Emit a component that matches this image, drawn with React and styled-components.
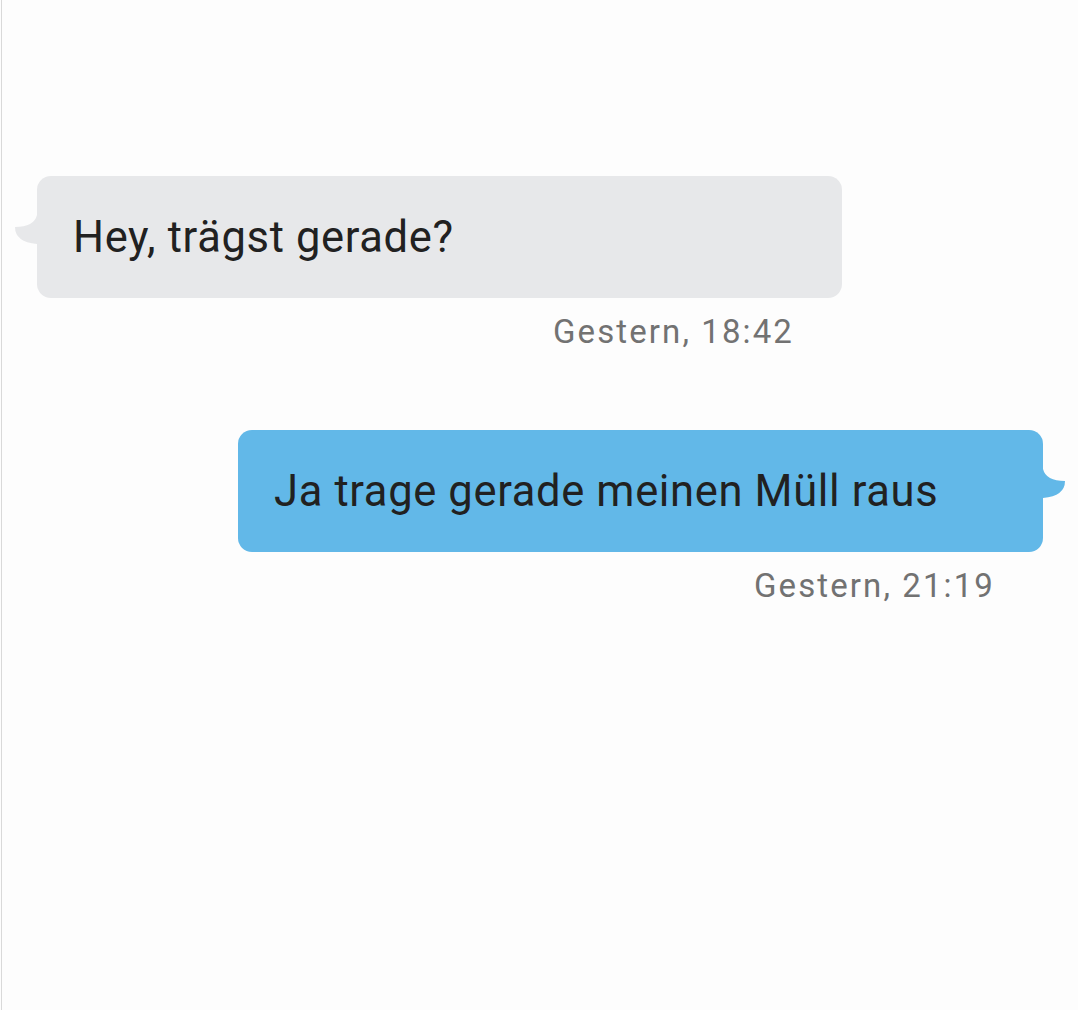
import React from "react";
import styled, { createGlobalStyle } from "styled-components";

const GlobalStyle = createGlobalStyle`
  html, body {
    margin: 0;
    padding: 0;
    background: #fdfdfd;
  }
  body {
    font-family: Roboto, "Noto Sans", Arial, sans-serif;
  }
`;

const Page = styled.div`
  box-sizing: border-box;
  min-height: 1010px;
  margin-left: 1px;
  border-left: 1px solid #d9d9d9;
  background: #fdfdfd;
  display: flex;
  flex-direction: column;
  gap: 79px;
  padding: 176px 35px 0 35px;
`;

const Group = styled.div`
  display: flex;
  flex-direction: column;
  align-items: ${(p) => (p.$out ? "flex-end" : "flex-start")};
`;

const Bubble = styled.div`
  position: relative;
  box-sizing: border-box;
  width: 805px;
  height: 122px;
  padding: 0 36px;
  display: flex;
  align-items: center;
  border-radius: 14px;
  background: ${(p) => (p.$out ? "#62b8e8" : "#e7e8ea")};
  color: #212121;
  font-size: 43.5px;
  letter-spacing: 0.65px;
`;

const Tail = styled.svg`
  position: absolute;
  top: 39px;
  width: 22px;
  height: 29px;
  ${(p) =>
    p.$out
      ? "right: -22px;"
      : "left: -22px; transform: scaleX(-1);"}
`;

const Time = styled.div`
  width: 805px;
  box-sizing: border-box;
  margin-top: 15px;
  padding-right: 48px;
  text-align: right;
  font-size: 33px;
  line-height: 38px;
  letter-spacing: 2.1px;
  color: #727272;
`;

function Message({ out, text, time }) {
  return (
    <Group $out={out}>
      <Bubble $out={out}>
        <Tail $out={out} viewBox="0 0 22 29">
          <path
            d="M0 0 Q3 12 22 12 Q22 27 0 29 Z"
            fill={out ? "#62b8e8" : "#e7e8ea"}
          />
        </Tail>
        {text}
      </Bubble>
      <Time>{time}</Time>
    </Group>
  );
}

export default function App() {
  return (
    <>
      <GlobalStyle />
      <Page>
        <Message text="Hey, trägst gerade?" time="Gestern, 18:42" />
        <Message out text="Ja trage gerade meinen Müll raus" time="Gestern, 21:19" />
      </Page>
    </>
  );
}
